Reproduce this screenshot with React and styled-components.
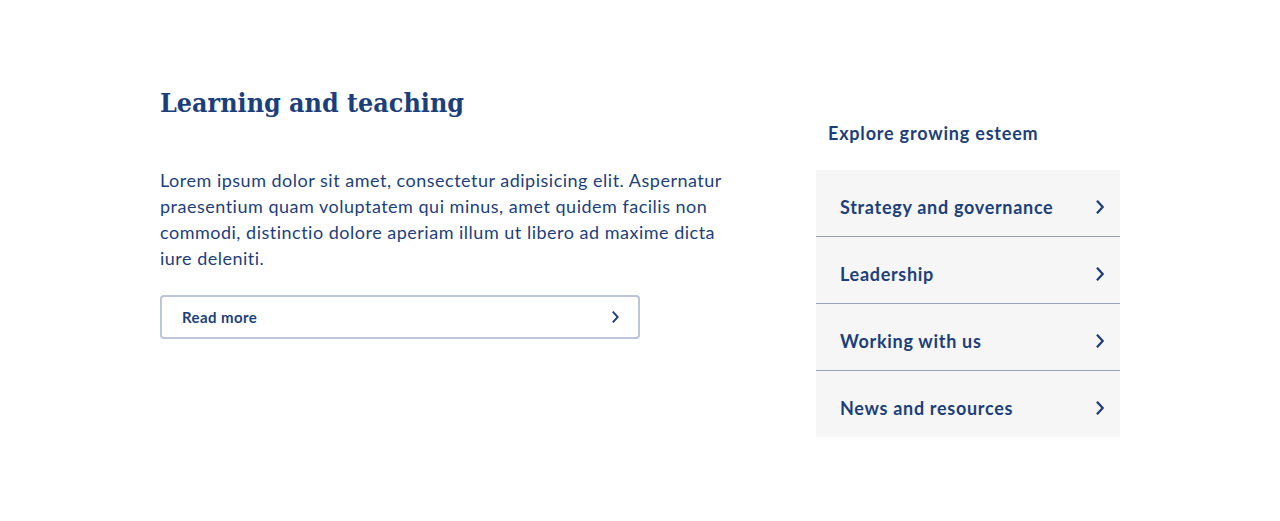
import React from 'react'
import styled, { createGlobalStyle } from 'styled-components'

const Global = createGlobalStyle`
  body {
    margin: 0;
    background: #ffffff;
    font-family: 'Lato', 'Noto Sans', sans-serif;
    color: #1c3f7c;
  }
`

const Section = styled.section`
  width: 960px;
  margin: 0 auto;
  padding: 86px 0 84px;
  display: flex;
  justify-content: space-between;
  align-items: flex-start;
`

const Main = styled.div`
  width: 576px;
`

const Heading = styled.h2`
  margin: 0 0 47px;
  font-family: 'DejaVu Serif Condensed', 'DejaVu Serif', serif;
  font-weight: 700;
  font-size: 26.6px;
  line-height: 34px;
  color: #1c3f7c;
`

const Text = styled.p`
  margin: 0 0 24px;
  font-size: 18px;
  line-height: 26px;
  letter-spacing: 0.5px;
  color: #1c3f7c;
`

const ReadMore = styled.a`
  box-sizing: border-box;
  width: 480px;
  height: 44px;
  display: flex;
  align-items: center;
  justify-content: space-between;
  padding: 0 19px 0 20px;
  border: 2px solid #bcc6da;
  border-radius: 4px;
  font-size: 15px;
  font-weight: 700;
  letter-spacing: 0.4px;
  color: #1c3f7c;
  text-decoration: none;
`

const Aside = styled.aside`
  width: 304px;
  padding-top: 35px;
`

const AsideTitle = styled.h3`
  margin: 0 0 25px;
  padding-left: 12px;
  font-size: 18px;
  line-height: 24px;
  font-weight: 700;
  letter-spacing: 0.8px;
  color: #1c3f7c;
`

const LinkList = styled.ul`
  list-style: none;
  margin: 0;
  padding: 0;
  background: #f6f6f6;
`

const LinkItem = styled.li`
  box-sizing: border-box;
  height: ${p => (p.$first ? '66px' : '67px')};
  display: flex;
  align-items: center;
  justify-content: space-between;
  padding: 8px 16px 0 24px;
  border-top: ${p => (p.$first ? 'none' : '1px solid #9aa2b6')};
  font-size: 18px;
  font-weight: 700;
  letter-spacing: 0.7px;
  color: #1c3f7c;
`

const Chevron = ({ size = 14 }) => (
  <svg width={size * 0.6} height={size} viewBox="0 0 8 14" fill="none">
    <path d="M1.5 1.5 L6.5 7 L1.5 12.5" stroke="#1c3f7c" strokeWidth="2.2" strokeLinecap="square" strokeLinejoin="miter" />
  </svg>
)

const links = ['Strategy and governance', 'Leadership', 'Working with us', 'News and resources']

export default function App() {
  return (
    <>
      <Global />
      <Section>
        <Main>
          <Heading>Learning and teaching</Heading>
          <Text>
            Lorem ipsum dolor sit amet, consectetur adipisicing elit. Aspernatur praesentium quam
            voluptatem qui minus, amet quidem facilis non commodi, distinctio dolore aperiam illum ut
            libero ad maxime dicta iure deleniti.
          </Text>
          <ReadMore href="#">
            Read more
            <Chevron size={12} />
          </ReadMore>
        </Main>
        <Aside>
          <AsideTitle>Explore growing esteem</AsideTitle>
          <LinkList>
            {links.map((l, i) => (
              <LinkItem key={l} $first={i === 0}>
                {l}
                <Chevron size={14} />
              </LinkItem>
            ))}
          </LinkList>
        </Aside>
      </Section>
    </>
  )
}
